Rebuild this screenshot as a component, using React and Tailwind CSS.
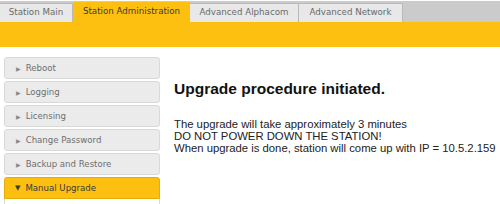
export default function App() {
  const items = ["Reboot", "Logging", "Licensing", "Change Password", "Backup and Restore"];
  const tabs = [
    { label: "Station Main", w: "w-[73px]", active: false },
    { label: "Station Administration", w: "w-[117px]", active: true },
    { label: "Advanced Alphacom", w: "w-[109px]", active: false },
    { label: "Advanced Network", w: "w-[104px]", active: false },
  ];
  return (
    <div className="w-[500px] h-[204px] overflow-hidden bg-white">
      <div className="flex h-[22px] pt-[2px] bg-[#cbcbcb] border-t border-white font-['DejaVu_Sans',sans-serif] text-[8.7px]">
        {tabs.map((t) =>
          t.active ? (
            <div
              key={t.label}
              className={`${t.w} -mt-[1px] flex items-center justify-center bg-[#fdc010] text-[#3a3a3a]`}
            >
              {t.label}
            </div>
          ) : (
            <div
              key={t.label}
              className={`${t.w} flex items-center justify-center bg-[#e8e8e8] border-r border-t border-[#b9b9b9] text-[#6a6a6a]`}
            >
              {t.label}
            </div>
          )
        )}
      </div>
      <div className="h-[25px] bg-[#fdc010]" />
      <div className="flex pt-[10px]">
        <div className="ml-[4px] w-[156px] flex flex-col gap-[2px] font-['DejaVu_Sans',sans-serif] text-[8.6px]">
          {items.map((label) => (
            <div
              key={label}
              className="h-[22px] flex items-center rounded-[3px] bg-[#ebebeb] border border-[#d9d9d9] text-[#6e6e6e]"
            >
              <span className="ml-[11px] mr-[5px] text-[6px] text-[#8a8a8a]">▶</span>
              {label}
            </div>
          ))}
          <div className="h-[22px] flex items-center rounded-t-[3px] bg-[#fdc010] border border-[#e3ad0a] text-[#3a3a3a]">
            <span className="ml-[10px] mr-[5px] text-[7px] text-[#3a3a3a]">▼</span>
            Manual Upgrade
          </div>
          <div className="-mt-[2px] h-[20px] border-x border-[#d9d9d9]" />
        </div>
        <div className="ml-[14px] pt-[23px] font-['Liberation_Sans',Arial,sans-serif] text-[#1a1a1a]">
          <h1 className="text-[15.5px] leading-[18px] font-bold text-[#111]">Upgrade procedure initiated.</h1>
          <div className="mt-[20px] text-[11.3px] leading-[12px] text-[#222]">
            <div>The upgrade will take approximately 3 minutes</div>
            <div>DO NOT POWER DOWN THE STATION!</div>
            <div>When upgrade is done, station will come up with IP = 10.5.2.159</div>
          </div>
        </div>
      </div>
    </div>
  );
}
